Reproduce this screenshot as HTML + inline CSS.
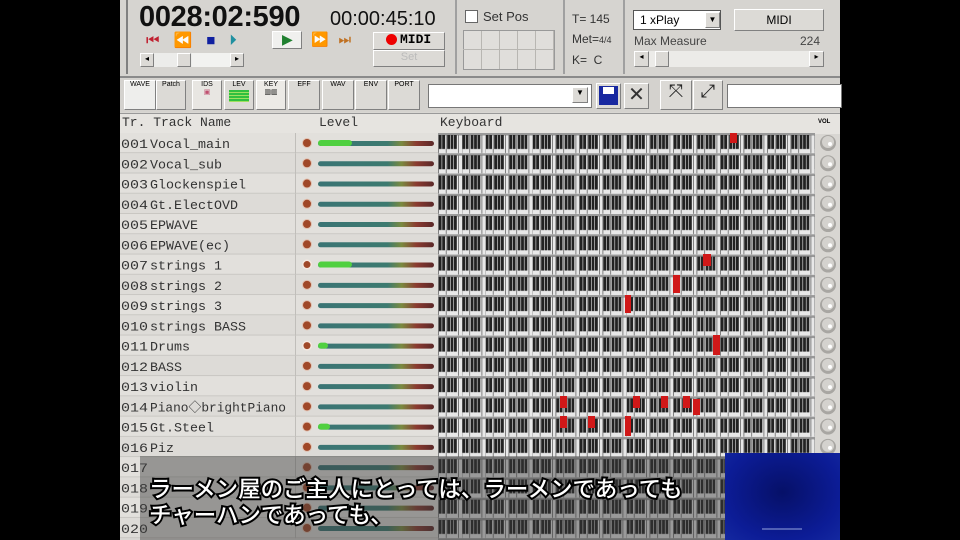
<!DOCTYPE html>
<html><head><meta charset="utf-8"><style>
body{margin:0;width:960px;height:540px;background:#000;overflow:hidden;position:relative;font-family:"Liberation Sans",sans-serif}
.a{position:absolute}
.mono{font-family:"Liberation Mono","DejaVu Sans Mono",monospace}
.btn{position:absolute;background:#dcdad6;border:1px solid;border-color:#fff #808080 #808080 #fff;box-sizing:border-box}
.sub{font-family:"Liberation Sans","Noto Sans CJK JP",sans-serif;font-size:22.5px;color:#fff;font-weight:500;-webkit-text-stroke:4px #000;paint-order:stroke fill;white-space:nowrap}
</style></head><body>
<div class="a" style="left:120px;top:0;width:720px;height:540px;background:#d8d6d2"></div>
<div class="a" style="left:120px;top:0;width:720px;height:76px;background:#d6d4d0;border-bottom:2px solid #8a8a8a"></div>
<div class="a" style="left:126px;top:0;width:2px;height:74px;background:#808080"></div>
<div class="a" style="left:455px;top:0;width:2px;height:74px;background:#a0a0a0"></div>
<div class="a" style="left:563px;top:0;width:2px;height:74px;background:#a0a0a0"></div>
<div class="a" style="left:623px;top:0;width:2px;height:74px;background:#a0a0a0"></div>
<div class="a" style="left:139px;top:1px;font-size:29px;font-weight:bold;color:#111;letter-spacing:-0.3px">0028:02:590</div>
<div class="a" style="left:330px;top:8px;font-size:20px;color:#111">00:00:45:10</div>
<div class="a" style="left:146px;top:31px;font-size:15px;letter-spacing:14px;white-space:nowrap"><span style="color:#c02030">⏮</span><span style="color:#a030c0">⏪</span><span style="color:#1020a0">■</span><span style="color:#2090a0">⏵</span></div>
<div class="btn" style="left:272px;top:31px;width:30px;height:18px;background:#f0f0ee"></div>
<div class="a" style="left:282px;top:31px;color:#208030;font-size:14px">▶</div>
<div class="a" style="left:311px;top:31px;font-size:14px;letter-spacing:10px;white-space:nowrap"><span style="color:#90a020">⏩</span><span style="color:#c07020">⏭</span></div>
<div class="btn" style="left:373px;top:32px;width:72px;height:18px"></div>
<div class="a" style="left:386px;top:34px;width:11px;height:11px;border-radius:50%;background:#e00"></div>
<div class="a mono" style="left:400px;top:32px;font-size:13px;font-weight:bold">MIDI</div>
<div class="btn" style="left:373px;top:50px;width:72px;height:17px;color:#bbb;font-size:11px;text-align:center">Set</div>
<div class="a" style="left:140px;top:53px;width:104px;height:14px;background:#ececea"></div>
<div class="btn" style="left:140px;top:53px;width:14px;height:14px;font-size:8px;text-align:center">◂</div>
<div class="btn" style="left:177px;top:53px;width:14px;height:14px"></div>
<div class="a" style="left:192px;top:53px;width:52px;height:14px;background:#f2f2f0"></div>
<div class="btn" style="left:230px;top:53px;width:14px;height:14px;font-size:8px;text-align:center">▸</div>
<div class="a" style="left:465px;top:10px;width:11px;height:11px;background:#fff;border:1px solid #666"></div>
<div class="a" style="left:483px;top:9px;font-size:13px;color:#333">Set Pos</div>
<div class="a" style="left:463px;top:30px;width:90px;height:38px;border:1px solid #999;background:repeating-linear-gradient(90deg,#e0dedb 0 17px,#b8b6b2 17px 18px),#ddd"></div>
<div class="a" style="left:463px;top:49px;width:90px;height:1px;background:#b8b6b2"></div>
<div class="a" style="left:572px;top:9px;font-size:12px;color:#333;line-height:20px">T= 145<br>Met=<span style="font-size:9px">4/4</span><br>K=&nbsp; C</div>
<div class="a" style="left:633px;top:10px;width:88px;height:20px;background:#fff;border:1px solid #555;box-sizing:border-box;font-size:12px;padding:2px 6px">1 xPlay</div>
<div class="btn" style="left:705px;top:12px;width:15px;height:16px;font-size:8px;text-align:center;line-height:14px">▼</div>
<div class="btn" style="left:734px;top:9px;width:90px;height:22px;font-size:12px;text-align:center;line-height:20px">MIDI</div>
<div class="a" style="left:634px;top:34px;font-size:12px;color:#444">Max Measure</div>
<div class="a" style="left:800px;top:34px;font-size:12px;color:#444">224</div>
<div class="a" style="left:634px;top:51px;width:190px;height:16px;background:#ecebe8"></div>
<div class="btn" style="left:634px;top:51px;width:15px;height:16px;font-size:8px;text-align:center">◂</div>
<div class="btn" style="left:655px;top:51px;width:14px;height:16px"></div>
<div class="btn" style="left:809px;top:51px;width:15px;height:16px;font-size:8px;text-align:center">▸</div>
<div class="a" style="left:120px;top:78px;width:720px;height:34px;background:#d4d2ce"></div>
<div class="btn" style="left:124px;top:80px;width:32px;height:30px;background:#eeeeec;font-size:7px;text-align:center">WAVE</div>
<div class="btn" style="left:156px;top:80px;width:30px;height:30px;font-size:7px;text-align:center">Patch</div>
<div class="btn" style="left:192px;top:80px;width:30px;height:30px;background:#e8e6e2;font-size:7px;text-align:center">IDS<br><span style="color:#c05070">▣</span></div>
<div class="btn" style="left:224px;top:80px;width:30px;height:30px;font-size:7px;text-align:center">LEV<div style="margin:2px auto;width:20px;height:12px;background:repeating-linear-gradient(#30c040 0 2px,#a0e060 2px 3px)"></div></div>
<div class="btn" style="left:256px;top:80px;width:30px;height:30px;background:#eceae6;font-size:7px;text-align:center">KEY<br>▥▥</div>
<div class="btn" style="left:288px;top:80px;width:32px;height:30px;font-size:7px;text-align:center">EFF</div>
<div class="btn" style="left:322px;top:80px;width:32px;height:30px;font-size:7px;text-align:center">WAV</div>
<div class="btn" style="left:355px;top:80px;width:32px;height:30px;font-size:7px;text-align:center">ENV</div>
<div class="btn" style="left:388px;top:80px;width:32px;height:30px;font-size:7px;text-align:center">PORT</div>
<div class="a" style="left:428px;top:84px;width:162px;height:22px;background:#fff;border:1px solid #777"></div>
<div class="btn" style="left:572px;top:87px;width:16px;height:16px;font-size:8px;text-align:center">▼</div>
<div class="btn" style="left:596px;top:83px;width:25px;height:26px"></div>
<div class="a" style="left:599px;top:86px;width:19px;height:19px;background:#1828a0"></div>
<div class="a" style="left:603px;top:87px;width:11px;height:7px;background:#fff"></div>
<div class="btn" style="left:624px;top:83px;width:25px;height:26px;font-size:20px;text-align:center;line-height:22px;color:#333">✕</div>
<div class="btn" style="left:660px;top:80px;width:32px;height:30px;font-size:18px;text-align:center;color:#222">⤧</div>
<div class="btn" style="left:693px;top:80px;width:30px;height:30px;font-size:18px;text-align:center;color:#222">⤢</div>
<div class="a" style="left:727px;top:84px;width:113px;height:22px;background:#fff;border:1px solid #777"></div>
<div class="a" style="left:120px;top:113px;width:720px;height:20px;background:#e6e4e0;border-top:1px solid #999"></div>
<div class="a mono" style="left:122px;top:115px;font-size:13px;color:#333">Tr. Track Name</div>
<div class="a mono" style="left:319px;top:115px;font-size:13px;color:#333">Level</div>
<div class="a mono" style="left:440px;top:115px;font-size:13px;color:#333">Keyboard</div>
<div class="a" style="left:818px;top:119px;font-size:6px;font-weight:bold">VOL</div>
<svg class="a" style="left:120px;top:133px" width="720" height="407">
<defs>
<pattern id="kb" x="318" y="0" width="23.5" height="20.26" patternUnits="userSpaceOnUse">
<rect width="23.5" height="20.26" fill="#e8e8e8"/>
<rect x="0" y="0" width="23.5" height="2.5" fill="#999"/>
<g fill="#222"><rect x="0.8" y="2" width="2.8" height="14"/><rect x="4.2" y="2" width="2.8" height="14"/><rect x="9.2" y="2" width="2.8" height="14"/><rect x="12.6" y="2" width="2.8" height="14"/><rect x="16" y="2" width="2.8" height="14"/></g>
<g fill="#666"><rect x="0" y="2" width="0.8" height="18"/><rect x="7.8" y="2" width="0.8" height="18"/><rect x="20" y="2" width="0.8" height="18"/></g>
</pattern>
<linearGradient id="lv" x1="0" x2="1"><stop offset="0" stop-color="#3a7474"/><stop offset="0.6" stop-color="#3d7a70"/><stop offset="0.72" stop-color="#7a8a40"/><stop offset="0.85" stop-color="#8a3a30"/><stop offset="1" stop-color="#5a2828"/></linearGradient>
</defs>
<g id="rows"></g>
<rect x="318" y="0" width="377" height="407" fill="url(#kb)"/>
<g fill="#d01818">
<rect x="610" y="0" width="7" height="10"/><rect x="583" y="121" width="8" height="12"/><rect x="553" y="142" width="7" height="18"/><rect x="505" y="162" width="6" height="18"/><rect x="593" y="202" width="7" height="20"/>
<rect x="440" y="263" width="7" height="12"/><rect x="513" y="263" width="7" height="12"/><rect x="541" y="263" width="7" height="12"/><rect x="563" y="263" width="7" height="12"/><rect x="573" y="266" width="7" height="16"/>
<rect x="440" y="283" width="7" height="12"/><rect x="468" y="283" width="7" height="12"/><rect x="505" y="283" width="6" height="20"/>
</g>
</svg>
<div class="a" style="left:140px;top:456px;width:587px;height:84px;background:rgba(60,60,60,0.45)"></div>
<div class="a" style="left:725px;top:453px;width:115px;height:87px;background:radial-gradient(ellipse at 50% 45%,#061068,#0c1c96 70%,#1428a0)"></div>
<div class="a" style="left:762px;top:528px;width:40px;height:2px;background:#8090d0;opacity:.6"></div>
<div class="a sub" style="left:149px;top:472px">ラーメン屋のご主人にとっては、ラーメンであっても</div>
<div class="a sub" style="left:149px;top:498px">チャーハンであっても、</div>
<script>
var names=["Vocal_main","Vocal_sub","Glockenspiel","Gt.ElectOVD","EPWAVE","EPWAVE(ec)","strings 1","strings 2","strings 3","strings BASS","Drums","BASS","violin","Piano◇brightPiano","Gt.Steel","Piz","","","",""];
var g=document.getElementById('rows'),s='',h=20.26;
for(var i=0;i<20;i++){var y=i*h,n=('00'+(i+1)).slice(-3);
s+='<rect x="0" y="'+y+'" width="318" height="'+h+'" fill="'+(i%2?'#dddbd7':'#e2e0dc')+'"/>';
s+='<rect x="0" y="'+(y+h-1)+'" width="318" height="1" fill="#c8c6c2"/>';
s+='<rect x="175" y="'+y+'" width="1" height="'+h+'" fill="#c0beba"/>';
s+='<text x="1" y="'+(y+15)+'" font-family="Liberation Mono,monospace" font-size="13" fill="#333" textLength="27" lengthAdjust="spacingAndGlyphs">'+n+'</text>';
if(names[i])s+='<text x="30" y="'+(y+15)+'" font-family="Liberation Mono,Noto Sans CJK JP,monospace" font-size="13" fill="#333" textLength="'+(names[i].length*8.0)+'" lengthAdjust="spacingAndGlyphs">'+names[i]+'</text>';
var ring=(i==6||i==10);
s+='<circle cx="187" cy="'+(y+10)+'" r="5" fill="'+(ring?'#f4e8e0':'#e0c0b0')+'"/><circle cx="187" cy="'+(y+10)+'" r="'+(ring?3.5:4)+'" fill="#a04828"/>';
s+='<rect x="198" y="'+(y+8)+'" width="116" height="5" rx="2.5" fill="url(#lv)"/>';
if(i==0||i==6||i==10||i==14){var w=[34,0,0,0,0,0,34,0,0,0,10,0,0,0,12][i];s+='<rect x="198" y="'+(y+7)+'" width="'+w+'" height="6" rx="3" fill="#50d040"/>';}
s+='<circle cx="708" cy="'+(y+10)+'" r="8" fill="#a8a6a2"/><circle cx="708" cy="'+(y+9)+'" r="6" fill="#d4d2ce"/><circle cx="710" cy="'+(y+11)+'" r="2" fill="#fff"/>';
}
g.innerHTML=s;
</script>
</body></html>
